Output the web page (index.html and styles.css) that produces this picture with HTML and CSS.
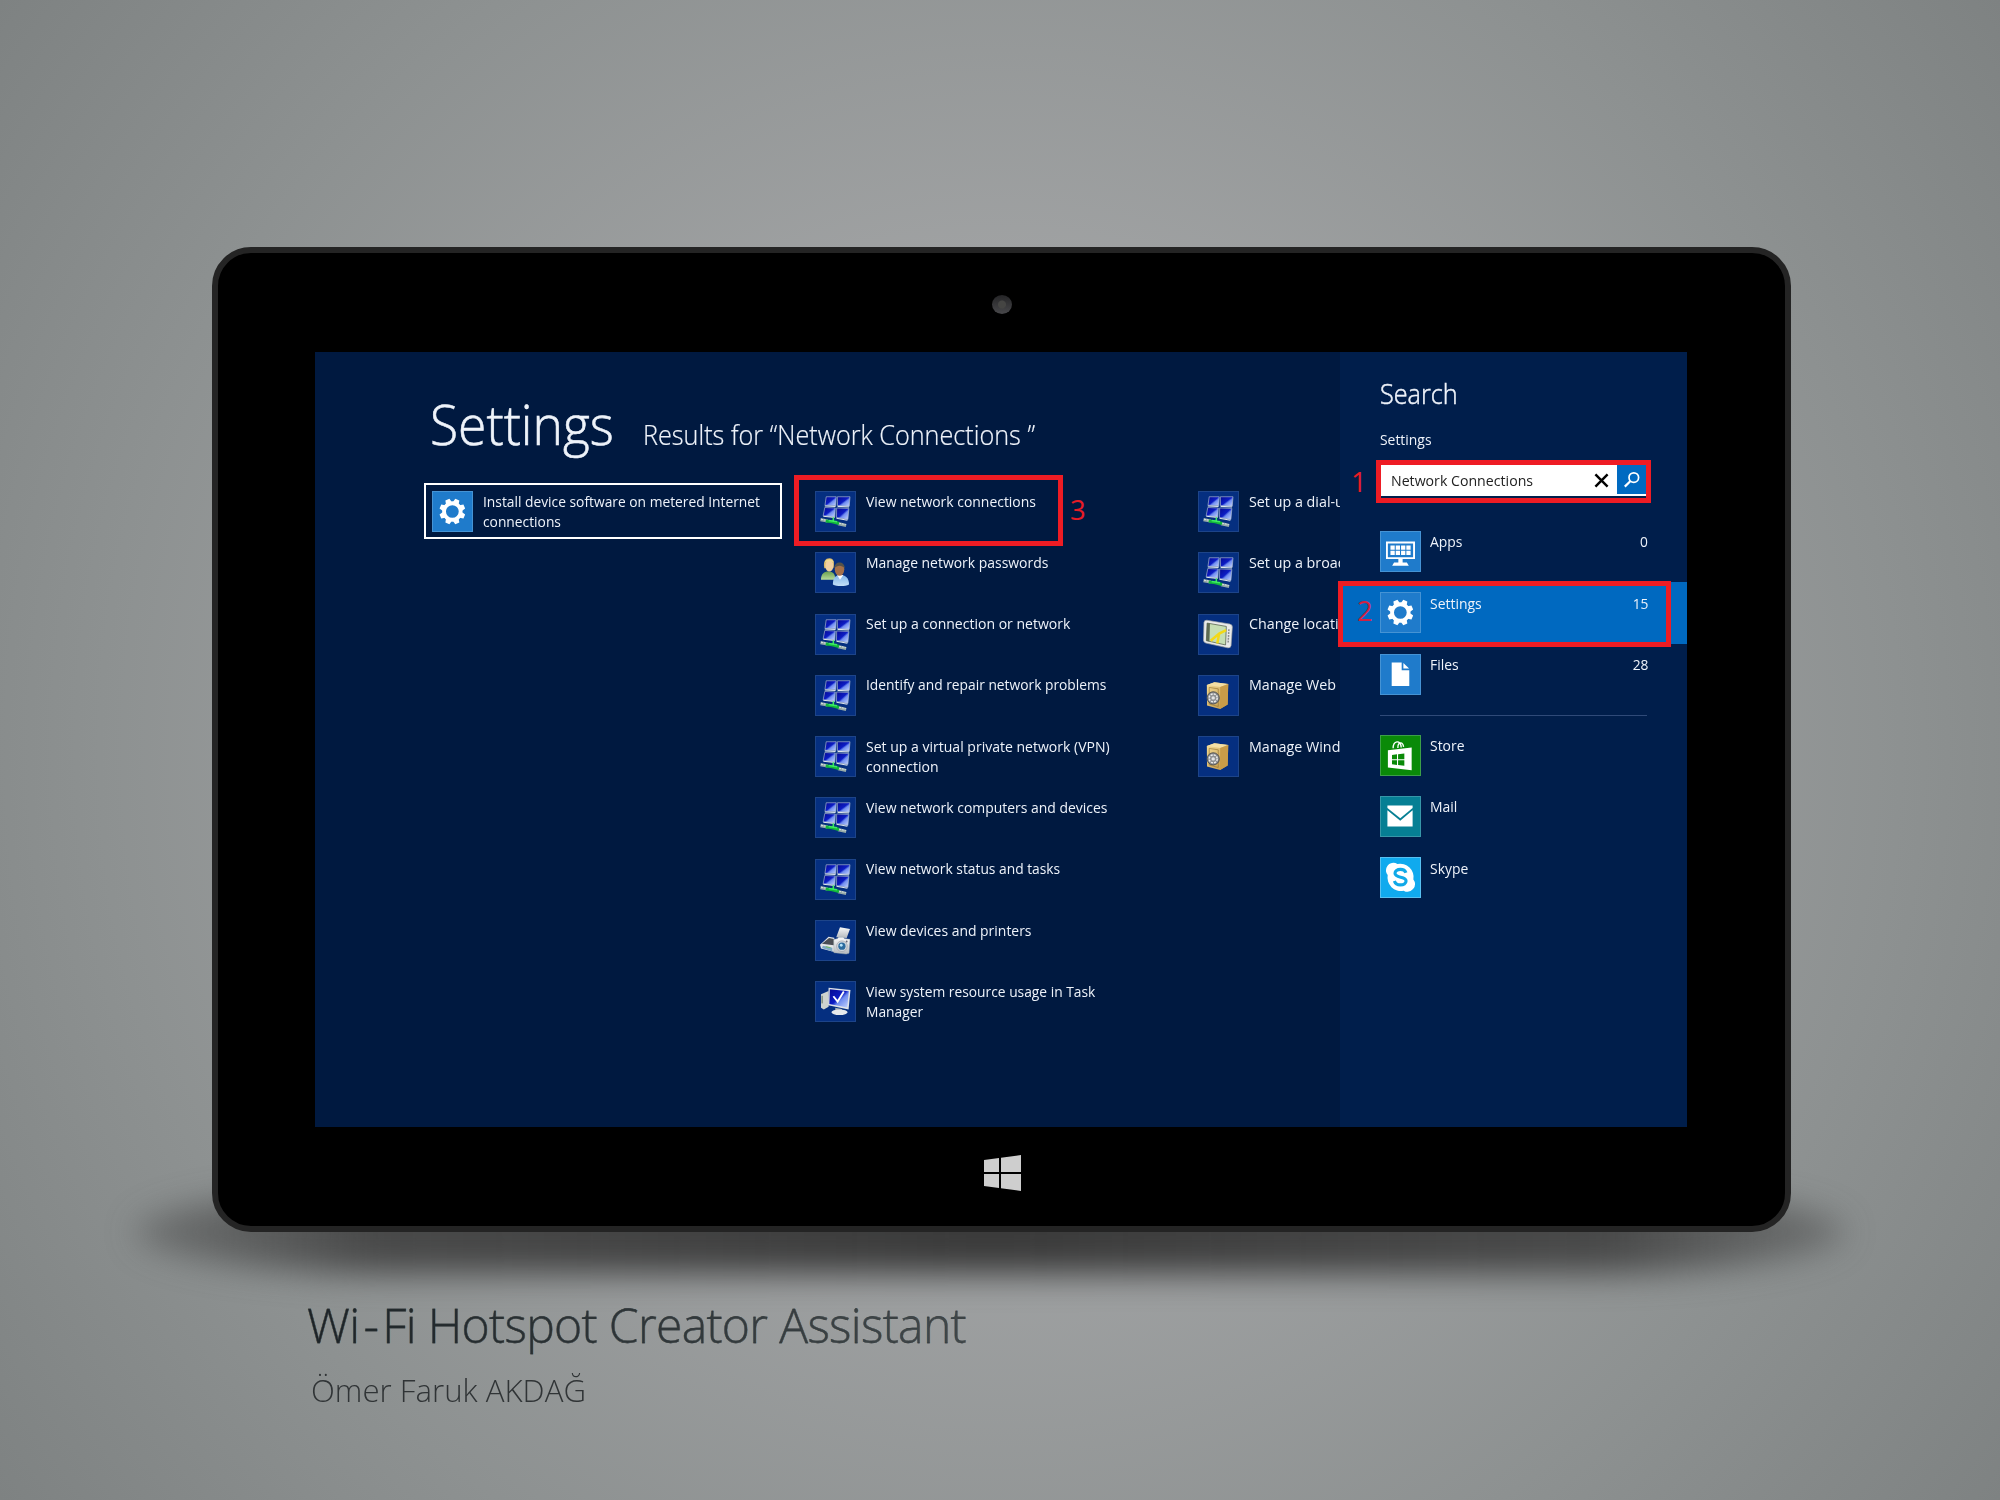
FILE: index.html
```html
<!DOCTYPE html>
<html lang="en">
<head>
<meta charset="utf-8">
<title>Wi-Fi Hotspot Creator Assistant</title>
<link rel="stylesheet" href="styles.css">
</head>
<body>
<svg class="defs" aria-hidden="true">
  <defs>
    <linearGradient id="scr" x1="0" y1="0" x2="1" y2="1"><stop offset="0" stop-color="#060a90"/><stop offset=".48" stop-color="#0c1cc4"/><stop offset=".6" stop-color="#6f8cf0"/><stop offset="1" stop-color="#c6d6ff"/></linearGradient>
    <linearGradient id="gold" x1="0" y1="0" x2="1" y2="1"><stop offset="0" stop-color="#f5dd98"/><stop offset="1" stop-color="#bd9140"/></linearGradient>
    <linearGradient id="silver" x1="0" y1="0" x2="0" y2="1"><stop offset="0" stop-color="#fafafa"/><stop offset="1" stop-color="#b4b9be"/></linearGradient>
    <linearGradient id="green" x1="0" y1="0" x2="0" y2="1"><stop offset="0" stop-color="#6aa050"/><stop offset="1" stop-color="#b5d99a"/></linearGradient>
    <linearGradient id="sky" x1="0" y1="0" x2="0" y2="1"><stop offset="0" stop-color="#7fb4e8"/><stop offset="1" stop-color="#c3dff8"/></linearGradient>
    <symbol id="network" viewBox="0 0 40 41">
      <g fill="url(#scr)" stroke="#aebbd0" stroke-width=".7">
        <path d="M10.500 5H21l-.5 9.500L9.200 14z"/><path d="M22.200 5H35.500l-.8 10-12.300-.6z"/>
        <path d="M9 16.300 20 16.800l-.5 9.400L7.300 25z"/><path d="M21.500 16.800 34.300 17.300l-1 11.500-12-2z"/>
      </g>
      <path d="M7.500 25.600l11.800 1.100M9 14.700l11.300.5M22.500 15.100l12 .7M21.300 27.600l11.500 2" stroke="#dde4ea" stroke-width="1.100"/>
      <path d="M4.500 29 12 30.500M23 33.200l8.500 2" stroke="#96aaa8" stroke-width="3.400"/>
      <path d="M5 28.600l5 1M24 32.800l7 1.500" stroke="#dfe8e6" stroke-width="1" stroke-dasharray="2 1"/>
      <path d="M10 30.500 17 31.200l7 2" stroke="#12b83a" stroke-width="3.200" fill="none"/>
      <path d="M18 26.500v4M13 30l9 1.400" stroke="#3dea62" stroke-width="1.600"/>
    </symbol>
    <symbol id="people" viewBox="0 0 40 41">
      <path d="M5 28c0-6 3-8.500 8-8.500s7 3 7 8.500z" fill="url(#green)"/>
      <path d="M8.500 16c-1.500-7 1-10.500 5.500-10.500S19.500 10 18 16z" fill="#d9b868"/>
      <ellipse cx="13.800" cy="13.500" rx="4.200" ry="6" fill="#f0cfa0"/>
      <path d="M9 10c1-4 8-5 9.500 0-3-1.500-6-2-9.500 0z" fill="#efd992"/>
      <path d="M17.500 33c0-7.500 3-10 8-10s9 3 9 10c-4 2.200-13 2.200-17 0z" fill="url(#sky)"/>
      <path d="M22 23l3 5 3.500-5z" fill="#fff"/>
      <ellipse cx="24.500" cy="17.200" rx="5" ry="6.800" fill="#a5704a"/>
      <path d="M19 16c0-8 11-8 11 0-3-3.500-8-3.500-11 0z" fill="#56524a"/>
    </symbol>
    <symbol id="printer" viewBox="0 0 40 41">
      <path d="M21 17l4-10.500 10.500 2L32 18z" fill="url(#silver)"/>
      <path d="M4 25 13 16.500l6 1v15L5 29z" fill="#e3e5e7"/>
      <path d="M6 24l7.500-6 5 1v6.500z" fill="#4a4e55"/>
      <path d="M6 28.500 17 32v-4L7 26z" fill="#7fa9c4"/><path d="M10 27l5 1" stroke="#6bbf59" stroke-width="1"/>
      <path d="M18.500 19.500l4-1 1-1.500h5l1 1.500 6 .8-1 14.500-3 1-13-1.500z" fill="url(#silver)" stroke="#9aa" stroke-width=".4"/>
      <circle cx="27" cy="26.500" r="5.600" fill="#d2d7dc" stroke="#9299a2" stroke-width=".6"/><circle cx="27" cy="26.500" r="3.800" fill="#2c6b9e"/><circle cx="26.300" cy="25.500" r="1.500" fill="#b8e4fa"/>
      <circle cx="32" cy="21.500" r="1" fill="#667"/>
    </symbol>
    <symbol id="monitor" viewBox="0 0 40 41">
      <path d="M5 13l8-3.500V26l-5 3-3-2z" fill="#cfd4cf"/><path d="M6.200 14.500v8" stroke="#5a6a50" stroke-width="1"/>
      <path d="M13 6 36 8.500 34 29 12.500 24.500z" fill="#dfe3e8"/>
      <path d="M14.300 7.500 34.300 9.800 32.600 26.800 13.800 23z" fill="url(#scr)"/>
      <path d="M18 15l4.500 5.500L29 10" fill="none" stroke="#fff" stroke-width="2"/>
      <path d="M20 27l7 1.500v3h-7z" fill="#aab0b6"/><ellipse cx="24.500" cy="31.800" rx="8.500" ry="3" fill="#e6e9ec"/>
    </symbol>
    <symbol id="gps" viewBox="0 0 40 41">
      <path d="M8 5.500 32 9.500q3 .5 2.800 3.500L33.500 32q-.3 3-3.500 2.500L7 29.500q-2.500-.6-2.500-3L5 8q.2-2.800 3-2.500z" fill="#e9eaea" stroke="#9ea3a3" stroke-width=".7"/>
      <path d="M8.300 8.500 28.500 12l-.8 19.500L7.500 27z" fill="#c6dfb4"/>
      <path d="M8.300 8.500l3 .5-.6 18.900-3.200-.9z" fill="#5d6a52"/>
      <path d="M8.300 8.500 28.500 12l-.8 19.500L7.500 27z" fill="none" stroke="#55604c" stroke-width=".8"/>
      <path d="M12 27l9-7.500 7.300-3.500M21 19.500 19 30" stroke="#f3d916" stroke-width="2.600" fill="none"/>
      <path d="M31.200 15l-.8 14" stroke="#8b8f8f" stroke-width="1.600" stroke-dasharray="2 1"/>
    </symbol>
    <symbol id="safe" viewBox="0 0 40 41">
      <path d="M8 9.500 16 6.500l14.500 2-.6 21.500-8 4.700L8.200 31z" fill="url(#gold)"/>
      <path d="M8 9.500 22 11.500 30.500 8.500 16 6.500z" fill="#f4dfa4"/><path d="M22 11.500l8.500-3-.6 21.500-8 4.700z" fill="#c99c48"/>
      <path d="M10.500 12l9.500 1.500v18.500l-9.500-2.500z" fill="none" stroke="#8f6b26" stroke-width=".6"/>
      <circle cx="14.700" cy="23" r="6.400" fill="#8e9092" stroke="#4c4d4f" stroke-width="1"/><circle cx="14.700" cy="23" r="4.200" fill="none" stroke="#eee" stroke-width="1.500" stroke-dasharray="2.200 1.100"/><circle cx="14.700" cy="23" r="1.800" fill="#e4e4e4"/>
    </symbol>
    <symbol id="gear" viewBox="0 0 40 41">
      <g fill="#fff" transform="translate(20.100 20.500)">
        <path fill-rule="evenodd" d="M0-10.700A10.700 10.700 0 1 0 0 10.700 10.700 10.700 0 1 0 0-10.700zM0-6.700A6.700 6.700 0 1 1 0 6.700 6.700 6.700 0 1 1 0-6.700z"/>
        <g transform="rotate(22.500)"><path id="tooth" d="M-3.300-9.500-2.300-13.600h4.600l1 4.100z"/><use href="#tooth" transform="rotate(45)"/><use href="#tooth" transform="rotate(90)"/><use href="#tooth" transform="rotate(135)"/><use href="#tooth" transform="rotate(180)"/><use href="#tooth" transform="rotate(225)"/><use href="#tooth" transform="rotate(270)"/><use href="#tooth" transform="rotate(315)"/></g>
      </g>
    </symbol>
    <symbol id="apps" viewBox="0 0 40 41">
      <path d="M6 11h28.500v16.500H6z" fill="none" stroke="#fff" stroke-width="2"/>
      <path d="M9.700 16.400h21.200M9.700 22h21.200" stroke="#fff" stroke-width="4.600" stroke-dasharray="4.500 1.070"/>
      <path d="M18 28.500h4.500v3.500h4.500l2 3.500H11.500l2-3.500H18z" fill="#fff"/>
    </symbol>
    <symbol id="file" viewBox="0 0 40 41"><path d="M11 8h10.500v8H29.500v16.500H11z" fill="#fff"/><path d="M23.300 8.300v5.900h6z" fill="#fff"/></symbol>
    <symbol id="store" viewBox="0 0 40 41">
      <path d="M12.500 13c0-8.500 8-9.500 8.500-1M17.500 12.500c0-6.500 5-7 6-1" fill="none" stroke="#fff" stroke-width="1.400"/>
      <path d="M7 15 32 12v24L7 33z" fill="#fff"/>
      <path d="M11.300 20l5.300-.7v5.100h-5.300zM17.700 19.200l6.600-.8v6h-6.600zM11.300 25.500h5.300v4.900l-5.300-.6zM17.700 25.500h6.600v5.900l-6.600-.9z" fill="#0a8a08"/>
    </symbol>
    <symbol id="mail" viewBox="0 0 40 41"><path d="M6.500 9h26.500v2.500L20 22.300 6.500 11.500z" fill="#fff"/><path d="M6.500 14 20 25 33 14v17H6.500z" fill="#fff"/></symbol>
    <symbol id="skype" viewBox="0 0 40 41">
      <path d="M12.500 5a7.500 7.500 0 0 1 4.500 1.300A14 14 0 0 1 33.800 22.500 8 8 0 0 1 23.500 34.300 14 14 0 0 1 6.800 18 8 8 0 0 1 12.500 5z" fill="#fff"/>
      <path d="M26 15.500c-1-2.600-3-3.500-5.700-3.500-3.600 0-5.800 1.800-5.800 4.100 0 5.600 11.600 2.700 11.600 8 0 2.600-2.500 4.200-6 4.200-3.400 0-5.300-1.300-6.300-4.200" fill="none" stroke="#10a9e8" stroke-width="3.300"/>
    </symbol>
  </defs>
</svg>

<main class="stage">
  <div class="shadow"></div>
  <section class="device">
    <div class="camera"></div>
    <div class="screen">
      <div class="results">
        <header class="results-head">
          <h1 class="title"><span>Settings</span></h1>
          <p class="subtitle"><span>Results for “Network Connections ”</span></p>
        </header>
        <div class="columns">
          <div class="column first">
            <div class="item selected"><svg class="tile blue"><use href="#gear"/></svg><p class="label tight">Install device software on metered Internet<br>connections</p></div>
          </div>
          <div class="column second">
            <div class="item"><svg class="tile"><use href="#network"/></svg><p class="label">View network connections</p></div>
            <div class="item"><svg class="tile"><use href="#people"/></svg><p class="label">Manage network passwords</p></div>
            <div class="item"><svg class="tile"><use href="#network"/></svg><p class="label wide">Set up a connection or network</p></div>
            <div class="item"><svg class="tile"><use href="#network"/></svg><p class="label tight">Identify and repair network problems</p></div>
            <div class="item"><svg class="tile"><use href="#network"/></svg><p class="label wide">Set up a virtual private network (VPN)<br>connection</p></div>
            <div class="item"><svg class="tile"><use href="#network"/></svg><p class="label">View network computers and devices</p></div>
            <div class="item"><svg class="tile"><use href="#network"/></svg><p class="label tight">View network status and tasks</p></div>
            <div class="item"><svg class="tile"><use href="#printer"/></svg><p class="label">View devices and printers</p></div>
            <div class="item"><svg class="tile"><use href="#monitor"/></svg><p class="label tight">View system resource usage in Task<br>Manager</p></div>
          </div>
          <div class="column third">
            <div class="item"><svg class="tile"><use href="#network"/></svg><p class="label clipped">Set up a dial-up</p></div>
            <div class="item"><svg class="tile"><use href="#network"/></svg><p class="label clipped">Set up a broad</p></div>
            <div class="item"><svg class="tile"><use href="#gps"/></svg><p class="label clipped">Change locati</p></div>
            <div class="item"><svg class="tile"><use href="#safe"/></svg><p class="label clipped">Manage Web</p></div>
            <div class="item"><svg class="tile"><use href="#safe"/></svg><p class="label clipped">Manage Wind</p></div>
          </div>
        </div>
      </div>
      <aside class="panel">
        <h2 class="panel-title"><span>Search</span></h2>
        <p class="scope"><span>Settings</span></p>
        <div class="search">
          <span class="query">Network Connections</span>
          <svg class="clear" viewBox="0 0 16 16"><path d="M1.500 1.500l13 13M14.500 1.500l-13 13" stroke="#000" stroke-width="2.600"/></svg>
          <span class="go"><svg viewBox="0 0 18 18"><circle cx="10.800" cy="6.600" r="4.800" fill="none" stroke="#fff" stroke-width="1.700"/><path d="M7.500 10 1.800 15.600" stroke="#fff" stroke-width="2.200"/></svg></span>
        </div>
        <div class="scopes">
          <div class="entry"><svg class="tile blue"><use href="#apps"/></svg><p class="label">Apps</p><span class="count">0</span></div>
          <div class="entry active"><svg class="tile blue"><use href="#gear"/></svg><p class="label">Settings</p><span class="count">15</span></div>
          <div class="entry"><svg class="tile blue"><use href="#file"/></svg><p class="label">Files</p><span class="count">28</span></div>
        </div>
        <hr class="rule">
        <div class="scopes">
          <div class="entry"><svg class="tile green"><use href="#store"/></svg><p class="label">Store</p></div>
          <div class="entry"><svg class="tile teal"><use href="#mail"/></svg><p class="label">Mail</p></div>
          <div class="entry"><svg class="tile cyan"><use href="#skype"/></svg><p class="label">Skype</p></div>
        </div>
      </aside>
      <div class="mark mark-search"></div><span class="step step-1">1</span>
      <div class="mark mark-scope"></div><span class="step step-2">2</span>
      <div class="mark mark-result"></div><span class="step step-3">3</span>
    </div>
    <svg class="winlogo" viewBox="0 0 37 36"><path d="M0 5 15 3v14H0zM17 2.700 37 0v17H17zM0 19h15v14L0 31zM17 19h20v17l-20-2.800z" fill="#cecece"/></svg>
  </section>
  <footer class="caption">
    <p class="name">Wi<span class="hyphen">-</span>Fi Hotspot Creator Assistant</p>
    <p class="author"><span>Ömer Faruk AKDAĞ</span></p>
  </footer>
</main>
</body>
</html>
```
FILE: styles.css
```css
* { box-sizing: border-box; margin: 0; padding: 0; }
body {
  width: 2000px;
  height: 1500px;
  overflow: hidden;
  font-family: "Open Sans", "Noto Sans", sans-serif;
  background: radial-gradient(circle 1250px at 1000px 750px, #a9abac 0%, #a0a2a3 38%, #8d9191 72%, #7e8282 100%);
}
.defs { position: absolute; width: 0; height: 0; }
p, h1, h2 { white-space: nowrap; font-weight: 400; }

.stage { position: relative; height: 1500px; padding: 247px 209px 0 212px; }
.shadow {
  position: absolute;
  left: 135px;
  top: 1190px;
  width: 1710px;
  height: 84px;
  border-radius: 260px / 42px;
  background: linear-gradient(90deg, rgba(60, 60, 60, .35), rgba(60, 60, 60, .85) 14%, #3a3a3a 50%, rgba(60, 60, 60, .85) 86%, rgba(60, 60, 60, .35));
  filter: blur(16px);
}
.device {
  position: relative;
  display: flex;
  flex-direction: column;
  align-items: center;
  width: 1579px;
  height: 985px;
  border: 6px solid #242424;
  border-radius: 39px;
  background: #000;
}
.camera {
  width: 20px;
  height: 19px;
  margin: 42px 0 38px;
  border-radius: 50%;
  background: radial-gradient(circle at 50% 50%, #454543 0 3.500px, transparent 4.500px), linear-gradient(#242426, #48484b);
}
.screen { position: relative; display: flex; width: 1372px; height: 775px; margin-right: 1px; flex: none; overflow: hidden; background: #001940; }
.winlogo { width: 37px; height: 36px; margin: 28px 0 0 2px; flex: none; }

.results { width: 1025px; height: 775px; overflow: hidden; color: #eef3fa; }
.results-head { display: flex; align-items: baseline; padding: 36px 0 0 115px; }
.title { width: 213px; font-weight: 300; font-size: 56px; line-height: 70px; }
.title span, .subtitle span, .panel-title span, .scope span, .author span { display: inline-block; transform-origin: 0 50%; }
.title span { transform: scaleX(.92); -webkit-text-stroke: .6px; }
.subtitle { font-weight: 300; font-size: 27.500px; line-height: 40px; -webkit-text-stroke: .2px; }
.subtitle span { transform: scaleX(.917); }

.columns { display: flex; padding: 25px 0 0 109px; }
.column { flex: none; }
.first { width: 391px; }
.second { width: 383px; padding-top: 8px; }
.third { padding-top: 8px; }
.item { display: flex; align-items: flex-start; gap: 10.500px; height: 61.300px; }
.selected { width: 358px; height: 56px; padding: 6px 0 0 6px; border: 2px solid #fff; gap: 10.500px; }
.tile { flex: none; width: 40.500px; height: 41px; background: #052f80; border: 1px solid #1d4489; }
.blue { background: #1f7bcb; border-color: #4593d4; }
.green { background: #0a8a08; border-color: #3c9f48; }
.teal { background: #067f94; border-color: #3797a8; }
.cyan { background: #10aaee; border-color: #58c0f0; }
.label { margin-top: -.500px; font-size: 15.300px; line-height: 20.400px; transform: scaleX(.911); transform-origin: 0 50%; }
.tight { transform: scaleX(.902); }
.wide { transform: scaleX(.917); }
.clipped { transform: scaleX(.935); }

.panel { width: 347px; padding-top: 23px; background: #001e4b; color: #eef3fa; }
.panel-title { padding-left: 40px; font-weight: 300; font-size: 28px; line-height: 36px; }
.panel-title span { transform: scaleX(.9); -webkit-text-stroke: .5px; }
.scope { margin-top: 18px; padding-left: 40px; font-size: 15.300px; line-height: 20px; }
.scope span { transform: scaleX(.908); }
.search { display: flex; align-items: center; width: 265px; height: 31px; margin: 16px 0 25px 41px; padding-left: 10px; background: #fff; color: #222; }
.query { width: 203px; padding-bottom: 2px; font-size: 15.300px; line-height: 20px; white-space: nowrap; transform: scaleX(.925); transform-origin: 0 50%; }
.clear { flex: none; width: 15px; height: 15px; }
.go { display: flex; align-items: center; justify-content: center; align-self: flex-start; width: 29px; height: 29px; margin-left: auto; background: #006ac1; }
.go svg { width: 18px; height: 18px; }
.entry { display: flex; align-items: flex-start; gap: 9.500px; height: 61.300px; padding: 10px 39px 0 40px; }
.entry .label { margin-top: .300px; }
.active { background: #0069c0; }
.count { margin: .300px 0 0 auto; font-size: 15.300px; line-height: 20.400px; transform: scaleX(.9); transform-origin: 100% 50%; }
.rule { width: 267px; height: 1px; margin: 10px 0 9px 40px; border: 0; background: #2f4a78; }

.mark { position: absolute; border: 5px solid #ee1c24; }
.mark-search { left: 1061px; top: 108px; width: 275px; height: 43px; }
.mark-scope { left: 1023px; top: 229px; width: 333px; height: 66px; }
.mark-result { left: 479px; top: 123px; width: 269px; height: 71px; }
.step { position: absolute; font-size: 27.500px; line-height: 30px; color: #e81c26; }
.step-1 { left: 1036px; top: 115px; }
.step-2 { left: 1042px; top: 244px; color: #cf2244; }
.step-3 { left: 755px; top: 143px; }

.caption { padding: 63px 0 0 95px; position: relative; color: #303436; font-weight: 300; }
.name {
  width: 700px;
  font-size: 48px;
  font-weight: 300;
  line-height: 60px;
  letter-spacing: -.650px;
  color: transparent;
  background: linear-gradient(90deg, #1c2326, #42494b 95%);
  -webkit-background-clip: text;
  background-clip: text;
  -webkit-text-stroke: .3px #2b3235;
}
.hyphen { margin: 0 4px; }
.author { margin-top: 15px; padding-left: 4px; font-size: 32px; font-weight: 300; line-height: 40px; }
.author span { transform: scaleX(.975); }
```
